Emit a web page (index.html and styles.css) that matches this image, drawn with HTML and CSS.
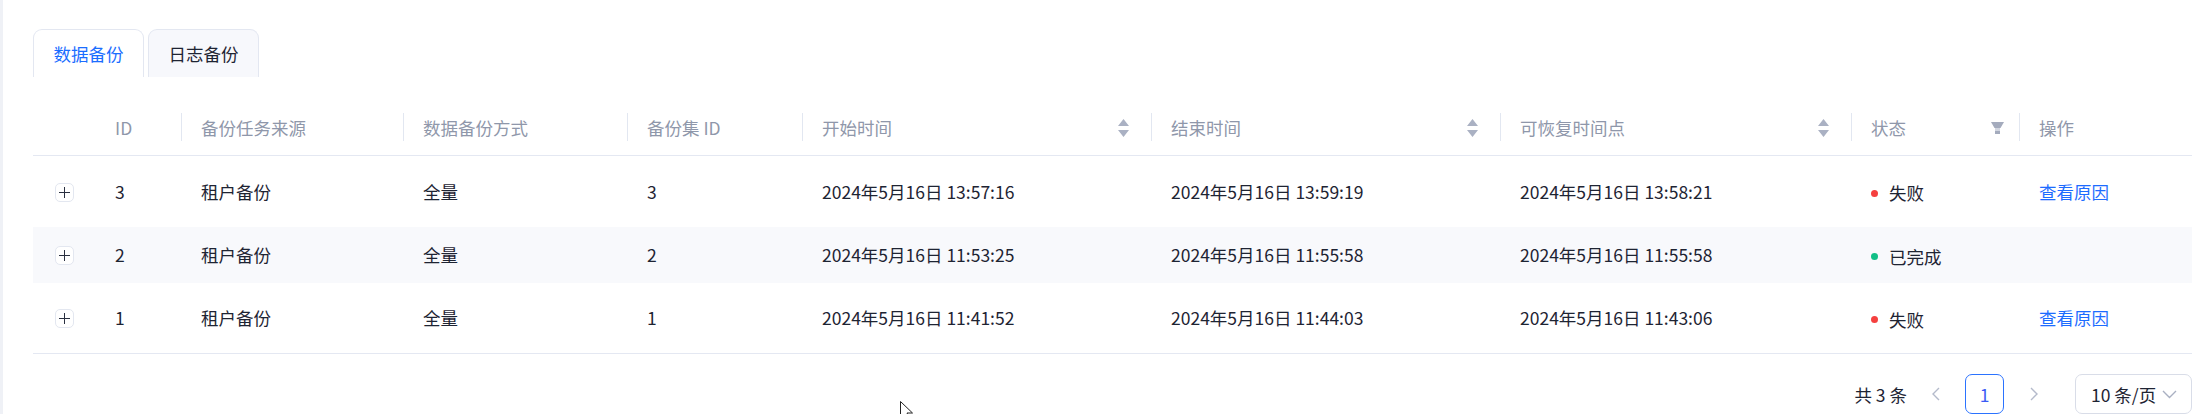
FILE: index.html
```html
<!DOCTYPE html>
<html lang="zh-CN">
<head>
<meta charset="utf-8">
<title>备份</title>
<link rel="stylesheet" href="styles.css">
</head>
<body>
<div class="page">
  <div class="tabs">
    <div class="tab active">数据备份</div>
    <div class="tab">日志备份</div>
  </div>
  <table class="grid">
    <colgroup>
      <col style="width:62px"><col style="width:86px"><col style="width:222px"><col style="width:224px"><col style="width:175px"><col style="width:349px"><col style="width:349px"><col style="width:351px"><col style="width:168px"><col style="width:173px">
    </colgroup>
    <thead>
      <tr>
        <th class="nosep"></th>
        <th class="nosep">ID</th>
        <th>备份任务来源</th>
        <th>数据备份方式</th>
        <th>备份集 ID</th>
        <th><div class="hcell"><span>开始时间</span><svg class="sort" width="11" height="18" viewBox="0 0 11 18"><path d="M5.5 0 L11 7 H0 Z M0 11 H11 L5.5 18 Z" fill="#aab1c3"/></svg></div></th>
        <th><div class="hcell"><span>结束时间</span><svg class="sort" width="11" height="18" viewBox="0 0 11 18"><path d="M5.5 0 L11 7 H0 Z M0 11 H11 L5.5 18 Z" fill="#aab1c3"/></svg></div></th>
        <th><div class="hcell"><span>可恢复时间点</span><svg class="sort" width="11" height="18" viewBox="0 0 11 18"><path d="M5.5 0 L11 7 H0 Z M0 11 H11 L5.5 18 Z" fill="#aab1c3"/></svg></div></th>
        <th><div class="hcell filtercell"><span>状态</span><svg class="filter" width="13" height="12" viewBox="0 0 13 12"><path d="M0 0 H13 L9.5 6 H3.5 Z" fill="#a4abbd"/><rect x="4" y="6" width="5" height="3" fill="#d2d6e0"/><rect x="4" y="9" width="5" height="3" fill="#a4abbd"/></svg></div></th>
        <th>操作</th>
      </tr>
    </thead>
    <tbody>
      <tr class="tall">
        <td><span class="expand"></span></td>
        <td>3</td><td>租户备份</td><td>全量</td><td>3</td>
        <td>2024年5月16日 13:57:16</td><td>2024年5月16日 13:59:19</td><td>2024年5月16日 13:58:21</td>
        <td><span class="status"><i class="dot red"></i>失败</span></td>
        <td><a class="link">查看原因</a></td>
      </tr>
      <tr class="short alt">
        <td><span class="expand"></span></td>
        <td>2</td><td>租户备份</td><td>全量</td><td>2</td>
        <td>2024年5月16日 11:53:25</td><td>2024年5月16日 11:55:58</td><td>2024年5月16日 11:55:58</td>
        <td><span class="status"><i class="dot green"></i>已完成</span></td>
        <td></td>
      </tr>
      <tr class="tall">
        <td><span class="expand"></span></td>
        <td>1</td><td>租户备份</td><td>全量</td><td>1</td>
        <td>2024年5月16日 11:41:52</td><td>2024年5月16日 11:44:03</td><td>2024年5月16日 11:43:06</td>
        <td><span class="status"><i class="dot red"></i>失败</span></td>
        <td><a class="link">查看原因</a></td>
      </tr>
    </tbody>
  </table>
  <div class="pager">
    <span class="total">共 3 条</span>
    <svg class="arrow" width="8" height="14" viewBox="0 0 8 14"><path d="M7 1 L1 7 L7 13" fill="none" stroke="#b4bacb" stroke-width="1.4"/></svg>
    <span class="pnum">1</span>
    <svg class="arrow" width="8" height="14" viewBox="0 0 8 14"><path d="M1 1 L7 7 L1 13" fill="none" stroke="#b4bacb" stroke-width="1.4"/></svg>
    <span class="size">10 条/页<svg width="15" height="9" viewBox="0 0 15 9"><path d="M1 1 L7.5 7.5 L14 1" fill="none" stroke="#a9b0c2" stroke-width="1.4"/></svg></span>
  </div>
  <svg class="cursor" width="14" height="20" viewBox="0 0 14 20"><path d="M0.5 0.5 V17 L4.5 13 L7.5 19.5 L10 18.5 L7 12 H12.5 Z" fill="#fff" stroke="#222" stroke-width="1"/></svg>
</div>
</body>
</html>
```

FILE: styles.css
```css
html, body {
  margin: 0;
  padding: 0;
  background: #fff;
}
body {
  font-family: "Noto Sans CJK SC", "Noto Sans", sans-serif;
  font-size: 17.5px;
  color: #1e2433;
  overflow: hidden;
}
.page {
  position: relative;
  height: 414px;
  box-sizing: border-box;
  border-left: 3px solid #eff1f6;
  padding: 29px 7px 0 30px;
}
.tabs {
  display: flex;
  gap: 4px;
}
.tab {
  width: 111px;
  height: 48px;
  box-sizing: border-box;
  border: 1px solid #e3e7f1;
  border-bottom: none;
  border-radius: 9px 9px 0 0;
  background: #f7f8fc;
  display: flex;
  align-items: center;
  justify-content: center;
  color: #1e2433;
  line-height: 1;
}
.tab.active {
  background: #fff;
  color: #1a6dff;
}
.grid {
  margin-top: 23px;
  width: 2159px;
  table-layout: fixed;
  border-collapse: collapse;
}
.grid th {
  position: relative;
  height: 55px;
  padding: 0 0 0 20px;
  text-align: left;
  font-weight: 400;
  color: #8f97aa;
  border-bottom: 1px solid #e4e8f2;
  white-space: nowrap;
}
.grid th::before {
  content: "";
  position: absolute;
  left: 0;
  top: 13px;
  width: 1px;
  height: 28px;
  background: #e2e7f1;
}
.grid th.nosep::before {
  display: none;
}
.hcell {
  display: flex;
  align-items: center;
  justify-content: space-between;
  padding-right: 22px;
}
.hcell.filtercell {
  padding-right: 15px;
}
.sort, .filter {
  display: block;
}
.grid td {
  padding: 0 0 0 20px;
  white-space: nowrap;
  line-height: 1;
}
.grid td:first-child {
  padding: 0;
  text-align: center;
}
.grid tr.tall {
  height: 71px;
}
.grid tr.short {
  height: 56px;
}
.grid tr.alt td {
  background: #f8f9fc;
}
.grid tbody tr:last-child td {
  border-bottom: 1px solid #e4e8f2;
}
.expand {
  display: inline-block;
  position: relative;
  width: 19px;
  height: 19px;
  box-sizing: border-box;
  border: 1px solid #e3e7f0;
  border-radius: 5px;
  background: #fff;
  vertical-align: middle;
}
.expand::before, .expand::after {
  content: "";
  position: absolute;
  background: #2a3040;
}
.expand::before {
  left: 3px;
  right: 3px;
  top: 8px;
  height: 1px;
}
.expand::after {
  top: 3px;
  bottom: 3px;
  left: 8px;
  width: 1px;
}
.status {
  display: inline-flex;
  align-items: center;
  gap: 11px;
}
.dot {
  width: 7px;
  height: 7px;
  border-radius: 50%;
  display: inline-block;
}
.dot.red { background: #f5403f; }
.dot.green { background: #12bf86; }
.link {
  color: #1d6cff;
  cursor: pointer;
}
.pager {
  margin-top: 20px;
  display: flex;
  justify-content: flex-end;
  align-items: center;
  height: 40px;
}
.total {
  margin-right: 25px;
}
.arrow {
  display: block;
}
.pnum {
  width: 39px;
  height: 40px;
  box-sizing: border-box;
  border: 1px solid #2b73ff;
  border-radius: 7px;
  display: flex;
  align-items: center;
  justify-content: center;
  color: #3b5bf5;
  margin: 0 26px 0 25px;
}
.size {
  margin-left: 37px;
  width: 117px;
  height: 40px;
  box-sizing: border-box;
  border: 1px solid #d9dde8;
  border-radius: 7px;
  display: flex;
  align-items: center;
  justify-content: space-between;
  padding: 0 14px 0 15px;
}
.cursor {
  position: absolute;
  left: 897px;
  top: 401px;
}
```
